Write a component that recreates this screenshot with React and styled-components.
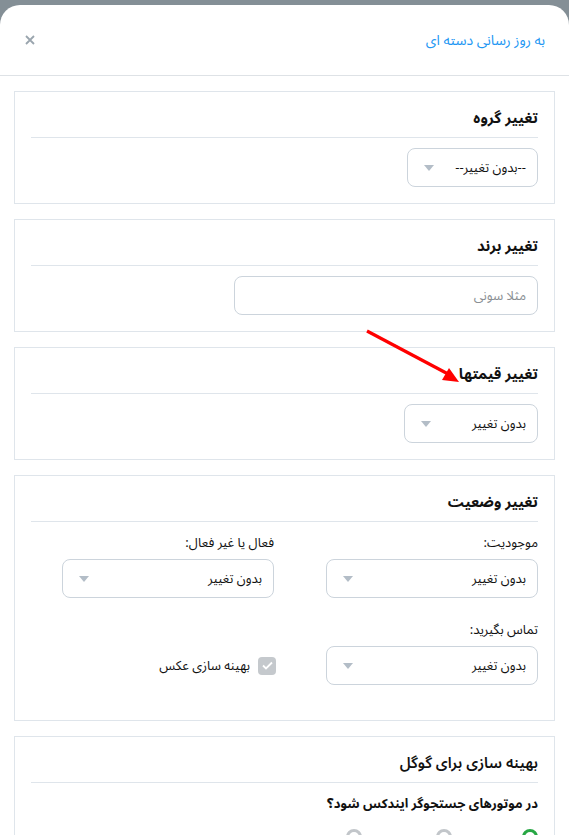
import styled, { createGlobalStyle } from "styled-components";

const GlobalStyle = createGlobalStyle`
  html, body {
    margin: 0;
    background: #848f96;
    overflow: hidden;
  }
  * {
    box-sizing: border-box;
  }
`;

const Sheet = styled.div`
  position: relative;
  margin-top: 5px;
  height: calc(100vh - 5px);
  overflow: hidden;
  direction: rtl;
  background: #fff;
  border-radius: 20px 20px 0 0;
  font-family: "Noto Sans Arabic", "Noto Naskh Arabic", "Vazirmatn", "DejaVu Sans", sans-serif;
  color: #111;
`;

const Header = styled.div`
  display: flex;
  align-items: center;
  justify-content: space-between;
  height: 71px;
  padding: 0 24px 0 25px;
  border-bottom: 1px solid #dee2e6;
`;

const Title = styled.h5`
  margin: 0;
  font-size: 14px;
  font-weight: 400;
  color: #2196f3;
`;

const CloseButton = styled.button`
  display: flex;
  padding: 0;
  border: none;
  background: none;
  color: #9aa5ae;
`;

const Body = styled.div`
  display: flex;
  flex-direction: column;
  gap: 15px;
  padding: 15px 14px;
`;

const Card = styled.section`
  border: 1px solid #dfe5eb;
  padding: 16px;
  background: #fff;
`;

const CardTitle = styled.h3`
  margin: 0 0 10px;
  padding-bottom: 8px;
  border-bottom: 1px solid #dfe5eb;
  font-size: 15px;
  font-weight: ${(p) => (p.$large ? 600 : 700)};
  line-height: 21px;
`;

const SelectBox = styled.div`
  display: flex;
  align-items: center;
  justify-content: space-between;
  width: ${(p) => p.$width}px;
  height: 39px;
  padding: 0 11px 0 16px;
  border: 1px solid #ccd4dc;
  border-radius: 8px;
  font-size: 13px;
  background: #fff;
`;

const Caret = styled.span`
  width: 0;
  height: 0;
  border-left: 5px solid transparent;
  border-right: 5px solid transparent;
  border-top: 6px solid #b3bdc7;
`;

const TextInput = styled.input`
  display: block;
  width: 304px;
  height: 39px;
  padding: 0 11px;
  border: 1px solid #ccd4dc;
  border-radius: 8px;
  font-family: inherit;
  font-size: 13px;
  direction: rtl;
  outline: none;

  &::placeholder {
    color: #8a8f94;
  }
`;

const StatusGrid = styled.div`
  display: grid;
  grid-template-columns: repeat(2, 212px);
  column-gap: 52px;
  row-gap: 22px;
  padding: 1px 0 19px;
`;

const Field = styled.div`
  display: flex;
  flex-direction: column;
`;

const Label = styled.label`
  margin-bottom: 6px;
  font-size: 13px;
  line-height: 20px;
`;

const CheckRow = styled.label`
  display: flex;
  align-items: center;
  gap: 8px;
  align-self: end;
  height: 39px;
  margin-right: -2px;
  font-size: 13px;
`;

const CheckBox = styled.span`
  display: flex;
  align-items: center;
  justify-content: center;
  width: 18px;
  height: 18px;
  border-radius: 4px;
  background: #c5c9cd;
`;

const Question = styled.p`
  margin: 0;
  padding-top: 1px;
  font-size: 13px;
  font-weight: 700;
  line-height: 20px;
`;

const RadioRow = styled.div`
  display: flex;
  margin-top: 15px;
`;

const RadioDot = styled.span`
  width: 16px;
  height: 16px;
  margin-left: ${(p) => p.$gap || 0}px;
  border-radius: 50%;
  border: 3px solid ${(p) => (p.$checked ? "#28a745" : "#c2c6ca")};
`;

const Annotation = styled.svg`
  position: absolute;
  left: 358px;
  top: 318px;
  pointer-events: none;
`;

function Select({ width, children }) {
  return (
    <SelectBox $width={width}>
      <span>{children}</span>
      <Caret />
    </SelectBox>
  );
}

export default function App() {
  return (
    <>
      <GlobalStyle />
      <Sheet>
        <Header>
          <Title>به روز رسانی دسته ای</Title>
          <CloseButton aria-label="بستن">
            <svg width="10" height="10" viewBox="0 0 10 10">
              <path d="M1 1L9 9M9 1L1 9" stroke="currentColor" strokeWidth="1.8" />
            </svg>
          </CloseButton>
        </Header>

        <Body>
          <Card>
            <CardTitle>تغییر گروه</CardTitle>
            <Select width={131}>--بدون تغییر--</Select>
          </Card>

          <Card>
            <CardTitle>تغییر برند</CardTitle>
            <TextInput placeholder="مثلا سونی" />
          </Card>

          <Card>
            <CardTitle>تغییر قیمتها</CardTitle>
            <Select width={134}>بدون تغییر</Select>
          </Card>

          <Card>
            <CardTitle>تغییر وضعیت</CardTitle>
            <StatusGrid>
              <Field>
                <Label>موجودیت:</Label>
                <Select width={212}>بدون تغییر</Select>
              </Field>
              <Field>
                <Label>فعال یا غیر فعال:</Label>
                <Select width={212}>بدون تغییر</Select>
              </Field>
              <Field>
                <Label>تماس بگیرید:</Label>
                <Select width={212}>بدون تغییر</Select>
              </Field>
              <CheckRow>
                <CheckBox>
                  <svg width="11" height="9" viewBox="0 0 11 9">
                    <path d="M1 4.5L4 7.5L10 1.5" fill="none" stroke="#fff" strokeWidth="1.8" />
                  </svg>
                </CheckBox>
                بهینه سازی عکس
              </CheckRow>
            </StatusGrid>
          </Card>

          <Card>
            <CardTitle $large>بهینه سازی برای گوگل</CardTitle>
            <Question>در موتورهای جستجوگر ایندکس شود؟</Question>
            <RadioRow>
              <RadioDot $checked $gap={70} />
              <RadioDot $gap={74} />
              <RadioDot />
            </RadioRow>
          </Card>
        </Body>

        <Annotation width="110" height="68" viewBox="0 0 110 68">
          <line x1="9" y1="8" x2="92" y2="52" stroke="#ff0000" strokeWidth="3.2" />
          <polygon points="101,59 84,57 91,45" fill="#ff0000" />
        </Annotation>
      </Sheet>
    </>
  );
}
